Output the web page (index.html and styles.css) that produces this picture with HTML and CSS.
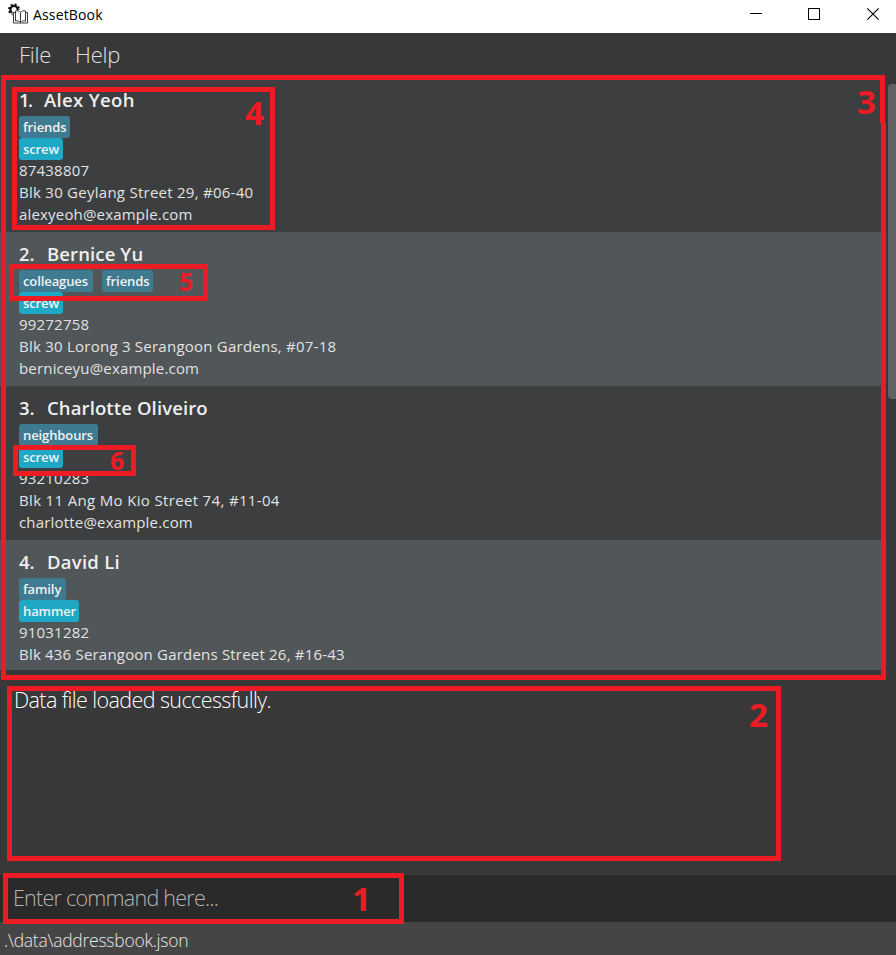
FILE: index.html
```html
<!DOCTYPE html>
<html lang="en">
<head>
<meta charset="utf-8">
<title>AssetBook</title>
<link rel="stylesheet" href="styles.css">
</head>
<body>
<div class="window">
  <header class="titlebar">
    <svg class="logo" width="22" height="22" viewBox="0 0 22 22">
      <g fill="none" stroke="#111">
        <circle cx="6" cy="6.500" r="3.600" stroke-width="2.200"/>
        <circle cx="6" cy="6.500" r="5.100" stroke-width="1.800" stroke-dasharray="2.100 1.900"/>
      </g>
      <path d="M4.500 7H20V22H4.500Z" fill="#fff"/>
      <path d="M7.500 8C9.500 7.300 11.500 8 12.500 9.500C13.500 8 15.500 7.300 17.500 8V18C15.500 17.500 13.700 18.200 12.500 19.500C11.300 18.200 9.500 17.500 7.500 18ZM12.500 9.500V19.500M7 9.500H5.500V20H11.500L12.500 20.700L13.500 20H19.500V9.500H18" fill="#fff" stroke="#3a3a3a"/>
    </svg>
    <span class="app-name">AssetBook</span>
    <svg class="controls" width="132" height="33" viewBox="0 0 132 33" fill="none" stroke="#000">
      <path d="M0 13.500H12"/>
      <rect x="58.500" y="8.500" width="11" height="11"/>
      <path d="M117.300 8.300 128.700 19.700M128.700 8.300 117.300 19.700" stroke-width="1.100"/>
    </svg>
  </header>
  <nav class="menu"><span class="file">File</span><span class="help">Help</span></nav>
  <div class="list-area">
    <ul class="people">
      <li class="person">
        <h2><span class="index">1.</span><span class="n1">Alex Yeoh</span></h2>
        <div class="tags"><span class="tag t-friends">friends</span></div>
        <div class="tags"><span class="tag asset t-screw">screw</span></div>
        <p class="phone">87438807</p>
        <p class="a1">Blk 30 Geylang Street 29, #06-40</p>
        <p class="email">alexyeoh@example.com</p>
      </li>
      <li class="person">
        <h2><span class="index wide">2.</span><span class="n2">Bernice Yu</span></h2>
        <div class="tags"><span class="tag t-colleagues">colleagues</span><span class="tag t-friends">friends</span></div>
        <div class="tags"><span class="tag asset t-screw">screw</span></div>
        <p class="phone">99272758</p>
        <p class="a2">Blk 30 Lorong 3 Serangoon Gardens, #07-18</p>
        <p class="email">berniceyu@example.com</p>
      </li>
      <li class="person">
        <h2><span class="index wide">3.</span><span class="n3">Charlotte Oliveiro</span></h2>
        <div class="tags"><span class="tag t-neighbours">neighbours</span></div>
        <div class="tags"><span class="tag asset t-screw">screw</span></div>
        <p class="phone">93210283</p>
        <p class="a3">Blk 11 Ang Mo Kio Street 74, #11-04</p>
        <p class="email">charlotte@example.com</p>
      </li>
      <li class="person">
        <h2><span class="index wide">4.</span><span class="n4">David Li</span></h2>
        <div class="tags"><span class="tag t-family">family</span></div>
        <div class="tags"><span class="tag asset t-hammer">hammer</span></div>
        <p class="phone">91031282</p>
        <p class="a4">Blk 436 Serangoon Gardens Street 26, #16-43</p>
      </li>
    </ul>
    <div class="scrollbar"><div class="thumb"></div></div>
  </div>
  <section class="result"><span>Data file loaded successfully.</span></section>
  <section class="command"><span>Enter command here...</span></section>
  <footer class="status"><span>.\data\addressbook.json</span></footer>

  <div class="mark m3-top"></div>
  <div class="mark m3"></div><b class="num num3">3</b>
  <div class="mark m4"></div><b class="num num4">4</b>
  <div class="mark m5"></div><b class="num small num5">5</b>
  <div class="mark m6"></div><b class="num small num6">6</b>
  <div class="mark m2"></div><b class="num num2">2</b>
  <div class="mark m1"></div><b class="num num1">1</b>
</div>
</body>
</html>
```
FILE: styles.css
```css
* { box-sizing: border-box; }
body { margin: 0; background: #383838; font-family: "Open Sans", "Noto Sans", sans-serif; }
.window { position: relative; width: 896px; height: 955px; overflow: hidden; display: flex; flex-direction: column; background: #383838; white-space: nowrap; }
.titlebar { height: 33px; flex: none; background: #fff; display: flex; padding-left: 8px; }
.logo { margin-top: 3px; }
.app-name { margin-left: 3px; font-size: 14px; line-height: 29px; color: #000; letter-spacing: 0.15px; }
.controls { margin-left: auto; margin-right: 14px; }
.menu { height: 45px; flex: none; display: flex; gap: 24px; padding-left: 19px; font-size: 22px; font-weight: 300; line-height: 42px; color: #e0e0e0; letter-spacing: -0.25px; }
.list-area { height: 592px; flex: none; display: flex; justify-content: space-between; }
.people { margin: 0; padding: 0; list-style: none; width: 882px; overflow: hidden; }
.person { height: 154px; padding: 8px 0 0 19px; background: #3c3e3f; color: #e3e3e3; }
.person:nth-child(even) { background: #515658; }
.person h2 { margin: 0; height: 30px; display: flex; font-size: 18.500px; font-weight: 600; line-height: 28px; color: #efefef; }
.index { width: 25px; letter-spacing: -1.5px; }
.index.wide { width: 28px; letter-spacing: 0; }
.n1 { letter-spacing: 0.35px; }
.n2, .n3 { letter-spacing: 0.12px; }
.n4 { letter-spacing: 0.25px; }
.person p { margin: 0; height: 22px; font-size: 15px; line-height: 21px; }
.person .phone { letter-spacing: 0.2px; }
.person .email { letter-spacing: 0.18px; }
.a1 { letter-spacing: 0.26px; }
.a2 { letter-spacing: 0.24px; }
.a3 { letter-spacing: 0.34px; }
.a4 { letter-spacing: 0.2px; }
.tags { height: 22px; display: flex; gap: 9px; }
.tag { height: 22px; padding: 0 4px; border-radius: 3px; background: #3e7b91; color: #f2f2f2; font-size: 13px; font-weight: 600; line-height: 22px; letter-spacing: -0.1px; }
.tag.asset { background: #1fa8c5; }
.t-friends { width: 51px; }
.t-screw { width: 44px; }
.t-colleagues { width: 74px; }
.t-neighbours { width: 79px; }
.t-family { width: 47px; }
.t-hammer { width: 60px; }
.scrollbar { width: 8px; padding-top: 6px; }
.thumb { height: 315px; border-radius: 4px 0 0 4px; background: #626262; }
.result { height: 205px; flex: none; padding: 16px 0 0 14px; font-size: 21.500px; font-weight: 300; line-height: 28px; letter-spacing: -0.6px; color: #fff; }
.command { height: 47px; flex: none; padding-left: 13px; background: #2a2a2a; color: #b4b4b4; font-size: 21.500px; font-weight: 300; line-height: 46px; letter-spacing: -0.75px; }
.status { flex: 1; padding-left: 4px; background: #454545; color: #e8e8e8; font-size: 17.500px; font-weight: 300; line-height: 37px; letter-spacing: -0.25px; }
.mark { position: absolute; border: 5px solid #ed1c24; }
.m3-top { left: 1px; top: 75px; width: 884px; height: 48px; border-bottom: 0; }
.m3 { left: 1px; top: 123px; width: 885px; height: 557px; border-top: 0; }
.m4 { left: 12px; top: 87px; width: 263px; height: 143px; }
.m5 { left: 9px; top: 264px; width: 199px; height: 37px; }
.m6 { left: 13px; top: 445px; width: 123px; height: 31px; }
.m2 { left: 7px; top: 686px; width: 774px; height: 175px; }
.m1 { left: 3px; top: 873px; width: 401px; height: 51px; }
.num { position: absolute; color: #ed1c24; font-size: 33px; font-weight: 700; line-height: 40px; }
.num.small { font-size: 25px; line-height: 30px; }
.num3 { left: 857px; top: 82px; }
.num4 { left: 245px; top: 93px; }
.num5 { left: 179px; top: 266px; }
.num6 { left: 110px; top: 445px; }
.num2 { left: 749px; top: 695px; }
.num1 { left: 352px; top: 879px; }
```
